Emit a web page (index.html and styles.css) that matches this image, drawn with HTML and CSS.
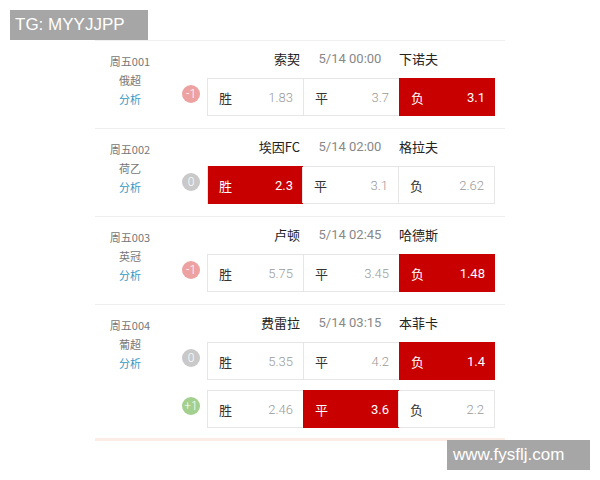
FILE: index.html
```html
<!DOCTYPE html>
<html>
<head>
<meta charset="utf-8">
<link rel="stylesheet" href="styles.css">
</head>
<body>
<div class="list">
  <div class="match">
    <div class="info"><div>周五001</div><div>俄超</div><div class="link">分析</div></div>
    <div class="main">
      <div class="head"><span class="home">索契</span><span class="time">5/14 00:00</span><span class="away">下诺夫</span></div>
      <div class="line"><span class="badge neg">-1</span>
        <div class="odds"><div class="cell"><span>胜</span><span class="v">1.83</span></div><div class="cell"><span>平</span><span class="v">3.7</span></div><div class="cell on"><span>负</span><span class="v">3.1</span></div></div>
      </div>
    </div>
  </div>
  <div class="match">
    <div class="info"><div>周五002</div><div>荷乙</div><div class="link">分析</div></div>
    <div class="main">
      <div class="head"><span class="home">埃因FC</span><span class="time">5/14 02:00</span><span class="away">格拉夫</span></div>
      <div class="line"><span class="badge zero">0</span>
        <div class="odds"><div class="cell on"><span>胜</span><span class="v">2.3</span></div><div class="cell"><span>平</span><span class="v">3.1</span></div><div class="cell"><span>负</span><span class="v">2.62</span></div></div>
      </div>
    </div>
  </div>
  <div class="match">
    <div class="info"><div>周五003</div><div>英冠</div><div class="link">分析</div></div>
    <div class="main">
      <div class="head"><span class="home">卢顿</span><span class="time">5/14 02:45</span><span class="away">哈德斯</span></div>
      <div class="line"><span class="badge neg">-1</span>
        <div class="odds"><div class="cell"><span>胜</span><span class="v">5.75</span></div><div class="cell"><span>平</span><span class="v">3.45</span></div><div class="cell on"><span>负</span><span class="v">1.48</span></div></div>
      </div>
    </div>
  </div>
  <div class="match last">
    <div class="info"><div>周五004</div><div>葡超</div><div class="link">分析</div></div>
    <div class="main">
      <div class="head"><span class="home">费雷拉</span><span class="time">5/14 03:15</span><span class="away">本菲卡</span></div>
      <div class="line"><span class="badge zero">0</span>
        <div class="odds"><div class="cell"><span>胜</span><span class="v">5.35</span></div><div class="cell"><span>平</span><span class="v">4.2</span></div><div class="cell on"><span>负</span><span class="v">1.4</span></div></div>
      </div>
      <div class="line second"><span class="badge pos">+1</span>
        <div class="odds"><div class="cell"><span>胜</span><span class="v">2.46</span></div><div class="cell on"><span>平</span><span class="v">3.6</span></div><div class="cell"><span>负</span><span class="v">2.2</span></div></div>
      </div>
    </div>
  </div>
</div>
<div class="mark tg">TG: MYYJJPP</div>
<div class="mark site">www.fysflj.com</div>
</body>
</html>
```
FILE: styles.css
```css
html, body {
  margin: 0;
  padding: 0;
  background: #fff;
}
body {
  font-family: "Noto Sans CJK SC", "Liberation Sans", sans-serif;
  color: #333;
  width: 600px;
  height: 480px;
  overflow: hidden;
  position: relative;
}
.list {
  margin: 40px 0 0 95px;
  width: 410px;
  border-top: 1px solid #f0f0f0;
  border-bottom: 3px solid #fbece6;
}
.match {
  display: flex;
  height: 87px;
  border-bottom: 1px solid #eeeeee;
}
.match.last {
  height: 133px;
  border-bottom: none;
}
.info {
  width: 70px;
  padding-top: 11px;
  display: flex;
  flex-direction: column;
  align-items: center;
  font-size: 11px;
  line-height: 19px;
  color: #777;
}
.info .link {
  color: #3597c2;
}
.main {
  display: flex;
  flex-direction: column;
}
.head {
  display: flex;
  height: 37px;
  align-items: center;
  margin-left: 42px;
  font-size: 13px;
  padding-bottom: 2px;
  box-sizing: border-box;
}
.head span {
  width: 96px;
}
.home {
  text-align: right;
  padding-right: 3px;
  box-sizing: border-box;
  color: #222;
}
.time {
  text-align: center;
  color: #888;
  font-family: "Roboto", "Liberation Sans", sans-serif;
  padding-right: 2px;
  box-sizing: border-box;
}
.away {
  color: #222;
}
.line {
  display: flex;
  align-items: center;
}
.line.second {
  margin-top: 10px;
}
.badge {
  width: 18px;
  height: 18px;
  border-radius: 50%;
  margin-left: 17px;
  margin-right: 7px;
  color: #fff;
  font-size: 12px;
  font-family: "Roboto", "Liberation Sans", sans-serif;
  font-weight: 300;
  display: flex;
  align-items: center;
  justify-content: center;
  margin-top: -6px;
}
.badge.neg { background: #eda2a2; }
.badge.zero { background: #c9c9c9; }
.badge.pos { background: #a3d08e; }
.odds {
  display: flex;
  border: 1px solid #e6e6e6;
  height: 38px;
  box-sizing: border-box;
  width: 288px;
}
.cell {
  flex: 1;
  display: flex;
  align-items: center;
  justify-content: space-between;
  padding: 0 10px 0 11px;
  font-size: 13px;
  border-left: 1px solid #e6e6e6;
}
.cell:first-child {
  border-left: none;
}
.cell .v {
  color: #9a9a9a;
  font-family: "Roboto", "Liberation Sans", sans-serif;
  font-weight: 300;
}
.cell.on {
  background: #c80000;
  color: #fff;
  border-left-color: #c80000;
  margin: -1px -1px -1px 0;
}
.cell.on .v {
  color: #fff;
  font-weight: 400;
}
.mark {
  position: absolute;
  background: #a6a6a6;
  color: #fff;
  font-family: "Liberation Sans", Arial, sans-serif;
  font-size: 17px;
  line-height: 30px;
  height: 30px;
  box-sizing: border-box;
}
.tg {
  left: 10px;
  top: 10px;
  width: 138px;
  padding-left: 5px;
}
.site {
  left: 447px;
  top: 440px;
  width: 143px;
  padding-left: 6px;
}
```
